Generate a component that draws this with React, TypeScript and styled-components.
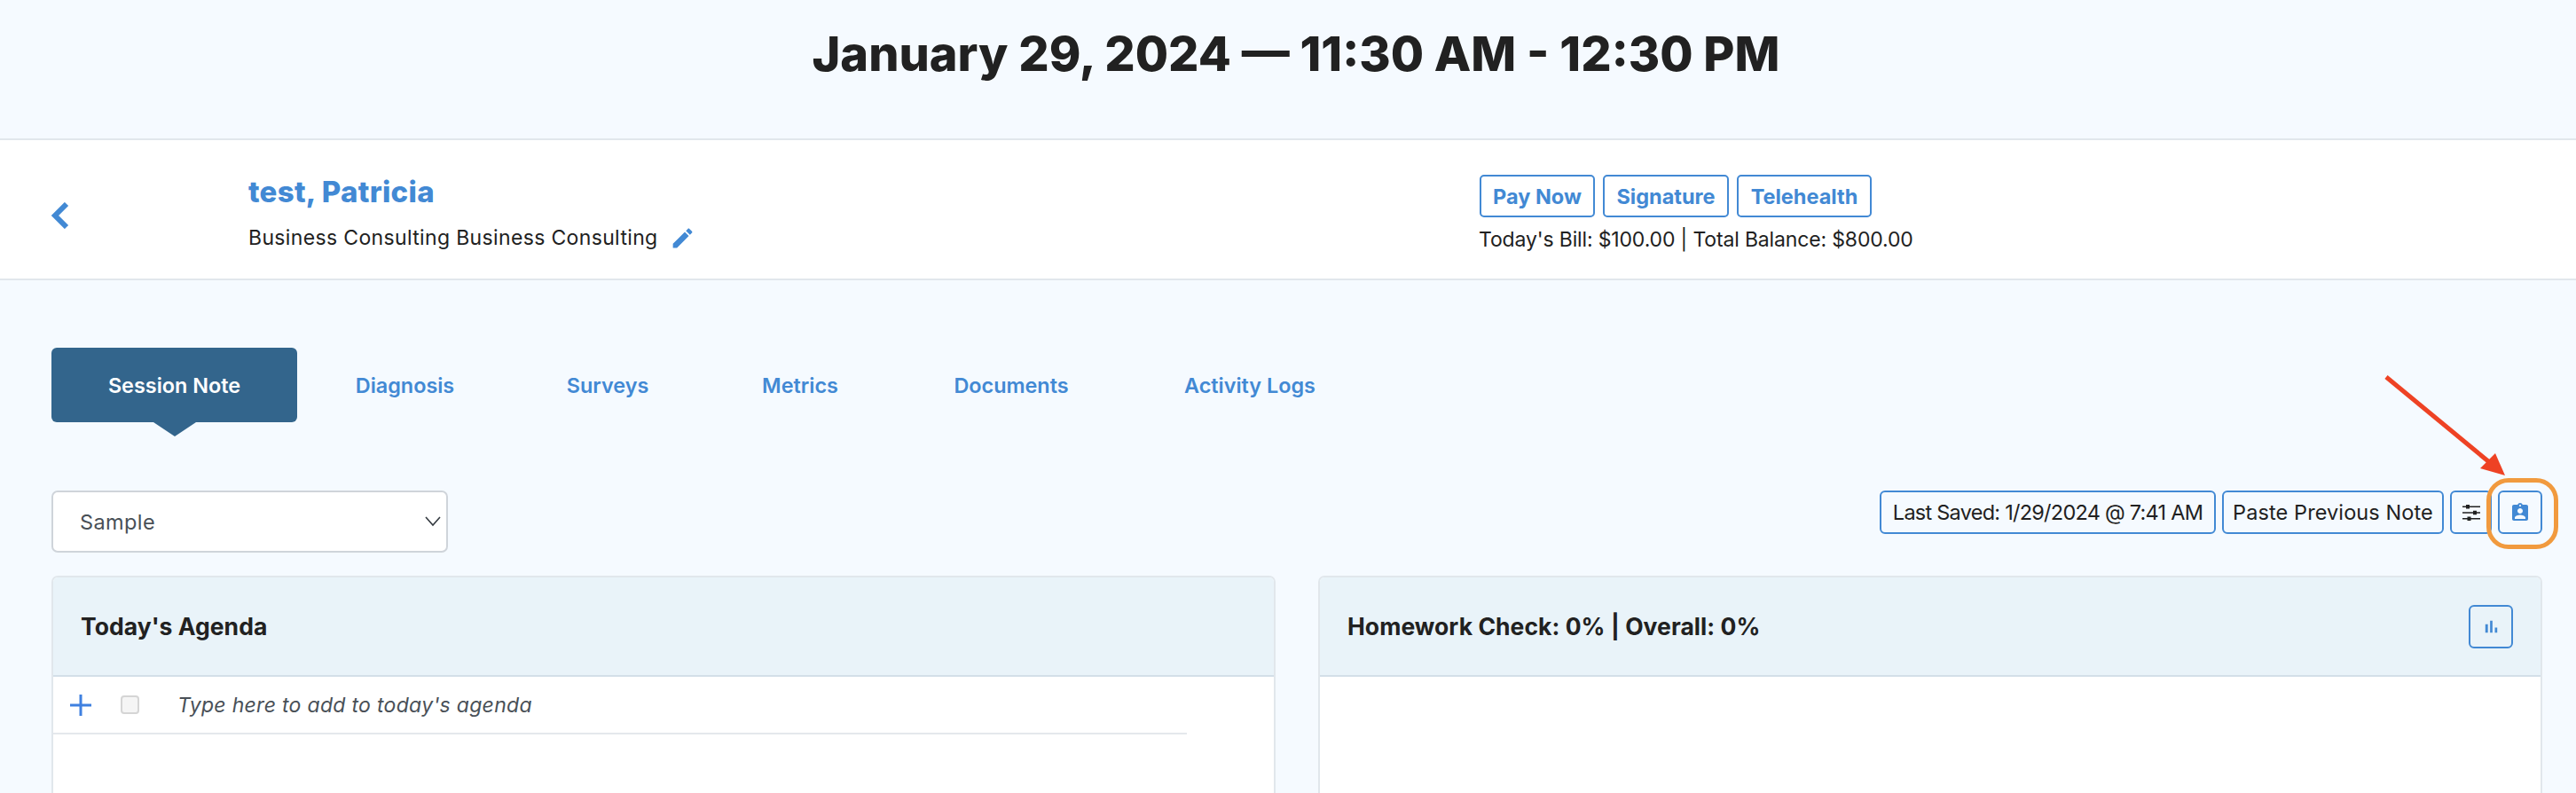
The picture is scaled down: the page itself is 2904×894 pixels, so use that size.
import React from "react";
import styled, { createGlobalStyle } from "styled-components";

const Global = createGlobalStyle`
  html, body { margin: 0; padding: 0; height: 894px; overflow: hidden; background: #f5faff; }
  body { font-family: Inter, "Open Sans", sans-serif; color: #212121; }
  * { box-sizing: border-box; }
`;
const blue = "#4289d4";

const TitleBar = styled.header`
  height: 158px; padding: 31px 0 0 18px; text-align: center;
  border-bottom: 2px solid #e1e7ec;
`;
const Title = styled.h1`
  margin: 0; font-size: 54px; line-height: 60px; font-weight: 800; color: #212121; letter-spacing: 0;
`;
const PatientBar = styled.section`
  height: 158px; background: #fff; border-bottom: 2px solid #e1e7ec;
  display: grid; grid-template-columns: 280px 1387px 1fr;
`;
const BackCell = styled.div`
  padding: 70px 0 0 57px;
  svg { display: block; }
`;
const NameCell = styled.div`padding-top: 37px;`;
const Name = styled.div`
  font-size: 33px; line-height: 42px; font-weight: 800; color: ${blue}; letter-spacing: 0.3px;
`;
const Service = styled.div`
  margin-top: 15px; display: flex; align-items: center; gap: 13px;
  font-size: 23px; line-height: 32px; letter-spacing: 0.35px; font-weight: 400;
`;
const BillCell = styled.div`padding-top: 39px; margin-left: 1px;`;
const LinkRow = styled.div`display: flex; gap: 9px;`;
const LinkButton = styled.button<{ $w: number }>`
  height: 48px; padding: 0; border: 2px solid ${blue}; border-radius: 5px; background: #fff;
  color: ${blue}; font: 700 23.5px Inter, sans-serif; width: ${(p) => p.$w}px;
`;
const Bill = styled.div`
  margin: 9px 0 0 -1px; font-size: 23px; line-height: 32px; letter-spacing: -0.15px;
`;
const Main = styled.main`padding: 76px 38px 0 58px;`;
const Tabs = styled.nav`display: flex; height: 84px;`;
const Tab = styled.div<{ $active?: boolean; $w: number }>`
  position: relative; width: ${(p) => p.$w}px; height: 84px;
  display: flex; align-items: center; justify-content: center;
  font-size: 23.4px; font-weight: 600; color: ${(p) => (p.$active ? "#fff" : blue)};
  background: ${(p) => (p.$active ? "#33658c" : "transparent")};
  border-radius: 6px;
  &::after {
    content: ""; display: ${(p) => (p.$active ? "block" : "none")};
    position: absolute; left: 50%; top: 100%; margin-left: -24px;
    border-left: 24px solid transparent; border-right: 24px solid transparent;
    border-top: 16px solid #33658c;
  }
`;
const ToolRow = styled.div`
  margin-top: 77px; display: flex; justify-content: space-between; align-items: flex-start; height: 96px;
`;
const SelectBox = styled.div`
  width: 447px; height: 70px; background: #fff; border: 2px solid #cfd4da; border-radius: 7px;
  display: flex; align-items: center; justify-content: space-between; padding: 0 5px 0 30px;
  font-size: 23.5px; color: #495057; letter-spacing: 0.4px;
`;
const Tools = styled.div`display: flex; gap: 7px; align-items: flex-start;`;
const ToolButton = styled.button<{ $w: number; $ls?: number }>`
  width: ${(p) => p.$w}px; height: 49px; padding: 0; display: flex; align-items: center; justify-content: center;
  border: 2px solid ${blue}; border-radius: 6px; background: #f5faff; color: #212121; white-space: nowrap;
  font: 400 23.5px Inter, sans-serif; letter-spacing: ${(p) => p.$ls ?? 0.1}px;
`;
const Highlight = styled.div`position: relative;`;
const Ring = styled.div`
  position: absolute; left: -13px; top: -14px; width: 81px; height: 80px;
  border: 5px solid #f19a3e; border-radius: 25px;
`;
const ArrowMark = styled.svg`
  position: absolute; left: -130px; top: -130px; overflow: visible;
`;
const Panels = styled.div`display: grid; grid-template-columns: 1380px 1380px; column-gap: 48px;`;
const Panel = styled.article`
  height: 300px; background: #fff; border: 2px solid #e1e7ec; border-radius: 7px; overflow: hidden;
`;
const PanelHead = styled.div`
  height: 112px; background: #e9f3f9; border-bottom: 2px solid #d3dfe8;
  display: flex; align-items: center; justify-content: space-between; padding: 0 31px;
`;
const PanelTitle = styled.h2`
  margin: 0; font-size: 26.5px; font-weight: 700; color: #212121; letter-spacing: 0.05px;
`;
const ChartButton = styled.button`
  width: 50px; height: 49px; padding: 0; display: flex; align-items: center; justify-content: center;
  border: 2px solid ${blue}; border-radius: 6px; background: transparent; color: ${blue};
`;
const AgendaRow = styled.div`
  height: 65px; margin-right: 98px; border-bottom: 2px solid #e4e8ec;
  display: flex; align-items: center; padding-left: 19px;
`;
const Check = styled.span`
  width: 21px; height: 21px; margin: 0 43px 0 33px; background: #f5f5f5; border: 2px solid #d5d5d5; border-radius: 4px;
`;
const Placeholder = styled.span`
  font-size: 23px; font-style: italic; color: #495057; letter-spacing: 0.3px;
`;
const Plus = styled.svg`display: block; flex: none;`;

const Icon = ({ d, size, color }: { d: string; size: number; color: string }) => (
  <svg width={size} height={size} viewBox="0 0 24 24" fill={color}><path d={d} /></svg>
);

export default function App() {
  return (
    <>
      <Global />
      <TitleBar><Title>January 29, 2024 — 11:30 AM - 12:30 PM</Title></TitleBar>
      <PatientBar>
        <BackCell>
          <svg width="22" height="30" viewBox="0 0 22 30" fill="none" stroke={blue} strokeWidth="6">
            <path d="M18 2 L5 15 L18 28" />
          </svg>
        </BackCell>
        <NameCell>
          <Name>test, Patricia</Name>
          <Service>
            Business Consulting Business Consulting
            <Icon size={29} color={blue} d="M3 17.25V21h3.75L17.81 9.94l-3.75-3.75L3 17.25zM20.71 7.04c.39-.39.39-1.02 0-1.41l-2.34-2.34c-.39-.39-1.02-.39-1.41 0l-1.83 1.83 3.75 3.75 1.83-1.83z" />
          </Service>
        </NameCell>
        <BillCell>
          <LinkRow>
            <LinkButton $w={130}>Pay Now</LinkButton>
            <LinkButton $w={142}>Signature</LinkButton>
            <LinkButton $w={152}>Telehealth</LinkButton>
          </LinkRow>
          <Bill>Today's Bill: $100.00 | Total Balance: $800.00</Bill>
        </BillCell>
      </PatientBar>
      <Main>
        <Tabs>
          <Tab $active $w={277}>Session Note</Tab>
          <Tab $w={243}>Diagnosis</Tab>
          <Tab $w={214}>Surveys</Tab>
          <Tab $w={220}>Metrics</Tab>
          <Tab $w={256}>Documents</Tab>
          <Tab $w={282}>Activity Logs</Tab>
        </Tabs>
        <ToolRow>
          <SelectBox>
            Sample
            <svg width="20" height="12" viewBox="0 0 20 12" fill="none" stroke="#343a40" strokeWidth="1.6"><path d="M2 1 L10 10 L18 1" /></svg>
          </SelectBox>
          <Tools>
            <ToolButton $w={379} $ls={-0.75}>Last Saved: 1/29/2024 @ 7:41 AM</ToolButton>
            <ToolButton $w={250}>Paste Previous Note</ToolButton>
            <ToolButton $w={47}>
              <svg width="20" height="18" viewBox="0 0 20 18" fill="#212121">
                <path d="M0 1.6h20v1.4H0zM0 8.3h20v1.4H0zM0 15h20v1.4H0z" />
                <path d="M4 0h4v4.6H4zM12 6.7h4v4.6h-4zM5.5 13.4h4V18h-4z" />
              </svg>
            </ToolButton>
            <Highlight>
              <ToolButton $w={50}>
                <Icon size={24} color={blue} d="M19 3h-4.18C14.4 1.84 13.3 1 12 1c-1.3 0-2.4.84-2.82 2H5c-1.1 0-2 .9-2 2v14c0 1.1.9 2 2 2h14c1.1 0 2-.9 2-2V5c0-1.1-.9-2-2-2zm-7 0c.55 0 1 .45 1 1s-.45 1-1 1-1-.45-1-1 .45-1 1-1zm0 4c1.66 0 3 1.34 3 3s-1.34 3-3 3-3-1.34-3-3 1.34-3 3-3zm6 12H6v-1.4c0-2 4-3.1 6-3.1s6 1.1 6 3.1V19z" />
              </ToolButton>
              <Ring />
              <ArrowMark width="140" height="120" viewBox="0 0 140 120">
                <path d="M4 2 L119 97" fill="none" stroke="#ee4224" strokeWidth="5" />
                <path d="M138 113 L127 88 L110 105 Z" fill="#ee4224" />
              </ArrowMark>
            </Highlight>
          </Tools>
        </ToolRow>
        <Panels>
          <Panel>
            <PanelHead><PanelTitle>Today's Agenda</PanelTitle></PanelHead>
            <AgendaRow>
              <Plus width="24" height="24" viewBox="0 0 24 24" stroke="#3f80e0" strokeWidth="3"><path d="M12 0V24M0 12H24" /></Plus>
              <Check />
              <Placeholder>Type here to add to today's agenda</Placeholder>
            </AgendaRow>
          </Panel>
          <Panel>
            <PanelHead>
              <PanelTitle>Homework Check: 0% | Overall: 0%</PanelTitle>
              <ChartButton>
                <Icon size={23} color={blue} d="M5 9.2h3V19H5zM10.6 5h2.8v14h-2.8zm5.6 8H19v6h-2.8z" />
              </ChartButton>
            </PanelHead>
          </Panel>
        </Panels>
      </Main>
    </>
  );
}
